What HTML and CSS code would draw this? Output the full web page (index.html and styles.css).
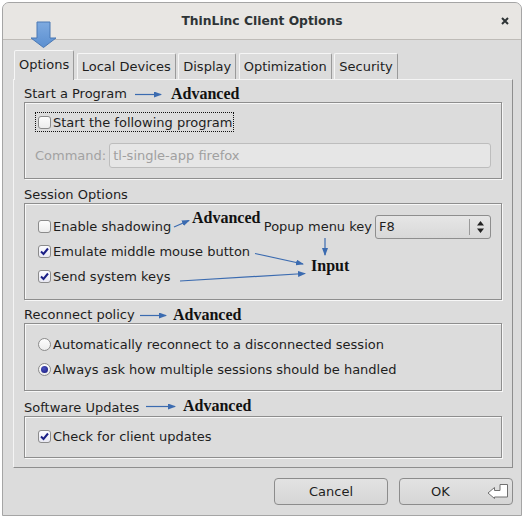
FILE: index.html
```html
<!DOCTYPE html>
<html lang="en">
<head>
    <meta charset="UTF-8">
    <title>ThinLinc Client Options</title>
    <link rel="stylesheet" href="styles.css">
</head>
<body>
    <div class="window">
        <div class="titlebar">
            <span class="title">ThinLinc Client Options</span>
            <button class="close" aria-label="Close">
                <svg viewBox="0 0 8 8" width="8" height="8"><path d="M1 1L7 7M7 1L1 7" stroke="#2e3436" stroke-width="2"/></svg>
            </button>
        </div>

        <div class="content">
            <div class="tabs">
                <div class="tab active">Options</div>
                <div class="tab">Local Devices</div>
                <div class="tab">Display</div>
                <div class="tab">Optimization</div>
                <div class="tab">Security</div>
            </div>

            <div class="panel">
                <div class="group">
                    <div class="group-title">Start a Program</div>
                    <div class="group-box box-program">
                        <label class="row focus"><span class="check"></span>Start the following program</label>
                        <div class="command">
                            <span class="command-label">Command:</span>
                            <div class="field">tl-single-app firefox</div>
                        </div>
                    </div>
                </div>

                <div class="group">
                    <div class="group-title">Session Options</div>
                    <div class="group-box box-session">
                        <div class="row">
                            <span class="check"></span>Enable shadowing
                            <div class="popup">
                                <span>Popup menu key</span>
                                <div class="select">
                                    <span class="select-value">F8</span>
                                    <span class="spin">
                                        <svg viewBox="0 0 7 12" width="7" height="12"><path d="M3.5 0L7 4.5H0Z M3.5 12L7 7.5H0Z" fill="#222"/></svg>
                                    </span>
                                </div>
                            </div>
                        </div>
                        <div class="row"><span class="check on"><svg viewBox="0 0 11 11" width="11" height="11"><path d="M2 5.5L4.5 8L9 2.5" fill="none" stroke="#1b1f86" stroke-width="2"/></svg></span>Emulate middle mouse button</div>
                        <div class="row"><span class="check on"><svg viewBox="0 0 11 11" width="11" height="11"><path d="M2 5.5L4.5 8L9 2.5" fill="none" stroke="#1b1f86" stroke-width="2"/></svg></span>Send system keys</div>
                    </div>
                </div>

                <div class="group group-reconnect">
                    <div class="group-title">Reconnect policy</div>
                    <div class="group-box box-reconnect">
                        <div class="row"><span class="radio"></span>Automatically reconnect to a disconnected session</div>
                        <div class="row"><span class="radio on"></span>Always ask how multiple sessions should be handled</div>
                    </div>
                </div>

                <div class="group group-updates">
                    <div class="group-title">Software Updates</div>
                    <div class="group-box box-updates">
                        <div class="row"><span class="check on"><svg viewBox="0 0 11 11" width="11" height="11"><path d="M2 5.5L4.5 8L9 2.5" fill="none" stroke="#1b1f86" stroke-width="2"/></svg></span>Check for client updates</div>
                    </div>
                </div>
            </div>

            <div class="buttons">
                <button class="button">Cancel</button>
                <button class="button button-ok">
                    <span class="ok-text">OK</span>
                    <svg class="enter-icon" viewBox="0 0 22 18" width="22" height="18"><path d="M1 10L7.5 4.5V7.5H13V1.5H20.5V14H7.5V15.5Z" fill="#fff" stroke="#707070" stroke-width="1"/></svg>
                </button>
            </div>
        </div>
    </div>

    <!-- annotations drawn over the screenshot -->
    <svg class="overlay" width="524" height="518" viewBox="0 0 524 518">
        <defs>
            <marker id="head" markerWidth="8" markerHeight="6" refX="7" refY="3" orient="auto" markerUnits="userSpaceOnUse">
                <path d="M0 0L8 3L0 6Z" fill="#3b6bb0"/>
            </marker>
            <linearGradient id="bigArrow" x1="0" y1="0" x2="0" y2="1">
                <stop offset="0" stop-color="#7eaae0"/>
                <stop offset="1" stop-color="#5b8fd0"/>
            </linearGradient>
        </defs>
        <path d="M37 22H50V38H56L43.5 47.5L31 38H37Z" fill="url(#bigArrow)" stroke="#4a78b4" stroke-width="1"/>
        <g stroke="#3b6bb0" stroke-width="1.2" fill="none" marker-end="url(#head)">
            <path d="M135 94.5H161"/>
            <path d="M174 227L189 220.5"/>
            <path d="M255 253.5L303 264"/>
            <path d="M180 281L305 273.5"/>
            <path d="M325 238V255"/>
            <path d="M140 315.5H166"/>
            <path d="M146 406.5H175"/>
        </g>
    </svg>
    <b class="note note-program">Advanced</b>
    <b class="note note-shadow">Advanced</b>
    <b class="note note-input">Input</b>
    <b class="note note-reconnect">Advanced</b>
    <b class="note note-updates">Advanced</b>
</body>
</html>
```

FILE: styles.css
```css
* {
    margin: 0;
    padding: 0;
    box-sizing: border-box;
}

body {
    width: 524px;
    height: 518px;
    position: relative;
    overflow: hidden;
    background: #fff;
    font-family: "DejaVu Sans", sans-serif;
    font-size: 13px;
    color: #1e1e1e;
}

button {
    font: inherit;
    color: inherit;
}

.window {
    margin: 2px 0 0 2px;
    width: 520px;
    height: 514px;
    border: 1px solid #a5a5a5;
    border-radius: 7px 7px 0 0;
    background: #dcdcdc;
    display: flex;
    flex-direction: column;
    overflow: hidden;
}

.titlebar {
    flex: none;
    height: 37px;
    display: grid;
    grid-template-columns: 1fr auto 1fr;
    align-items: center;
    background: #e8e6e3;
    border-bottom: 1px solid #bebbb7;
}

.title {
    grid-column: 2;
    font-weight: bold;
    font-size: 12.3px;
    color: #2e3436;
}

.close {
    grid-column: 3;
    justify-self: end;
    margin-right: 12px;
    width: 8px;
    height: 8px;
    border: none;
    background: none;
    display: flex;
}

.content {
    flex: 1;
    padding: 10px 8px 0 10px;
    display: flex;
    flex-direction: column;
}

/* tabs */
.tabs {
    display: flex;
    align-items: flex-end;
    gap: 2.5px;
    height: 29px;
    padding-left: 1px;
}

.tab {
    height: 26px;
    padding: 0 4px;
    line-height: 25px;
    border: 1px solid;
    border-bottom: none;
    border-color: #f6f6f6 #9a9a9a transparent #f6f6f6;
    border-radius: 2px 2px 0 0;
}

.tab.active {
    height: 30px;
    line-height: 28px;
    margin-bottom: -1px;
    position: relative;
    z-index: 1;
    background: #dcdcdc;
}

.panel {
    border: 1px solid;
    border-color: #f4f4f4 #8e8e8e #8e8e8e #f4f4f4;
    padding: 5px 10px 9px;
}

/* groups */
.group + .group {
    margin-top: 7px;
}

.group-reconnect {
    margin-top: 6px !important;
}

.group-updates {
    margin-top: 8px !important;
}

.group-title {
    line-height: 17px;
}

.group-box {
    border: 1px solid #8e8e8e;
    box-shadow: inset 1px 1px 0 #f7f7f7, 1px 1px 0 #f7f7f7;
    padding: 9px 10px 10px 13px;
}

.box-program {
    display: flex;
    flex-direction: column;
    gap: 11px;
}

.box-session {
    padding-top: 10px;
}

.box-reconnect {
    padding-top: 8px;
    padding-bottom: 8px;
}

.box-updates {
    padding-top: 7px;
    padding-bottom: 8px;
}

.row {
    display: flex;
    align-items: center;
    gap: 2px;
    height: 25px;
}

.focus {
    height: 20px;
    align-self: flex-start;
    margin-left: -3px;
    padding: 0 1px 0 2px;
    border: 1px dotted #111;
}

.check,
.radio {
    flex: none;
    width: 13px;
    height: 13px;
    border: 1px solid #8b8b8b;
    background: linear-gradient(#fdfdfd, #ececec);
    display: flex;
    align-items: center;
    justify-content: center;
}

.check {
    border-radius: 3px;
}

.check.on {
    background: linear-gradient(#fbfbff, #e8e8f2);
}

.radio {
    border-radius: 50%;
}

.radio.on::after {
    content: "";
    width: 7px;
    height: 7px;
    border-radius: 50%;
    background: radial-gradient(circle at 40% 35%, #4b52c0, #15177a);
}

.command {
    display: flex;
    align-items: center;
    gap: 3px;
    height: 25px;
    margin-left: -3px;
}

.command-label {
    color: #a2a2a2;
}

.field {
    flex: 1;
    height: 25px;
    padding-left: 3px;
    line-height: 23px;
    border: 1px solid #bdbdbd;
    border-radius: 3px;
    background: #e6e6e6;
    color: #a0a0a0;
}

.popup {
    margin-left: auto;
    display: flex;
    align-items: center;
    gap: 3px;
}

.select {
    width: 116px;
    height: 24px;
    display: flex;
    align-items: center;
    border: 1px solid #8e8e8e;
    border-radius: 3px;
    background: linear-gradient(#e6e6e6, #d8d8d8);
}

.select-value {
    padding-left: 3px;
}

.spin {
    margin-left: auto;
    width: 21px;
    height: 16px;
    border-left: 1px solid #9a9a9a;
    display: flex;
    align-items: center;
    justify-content: center;
}

/* dialog buttons */
.buttons {
    display: flex;
    justify-content: flex-end;
    gap: 11px;
    margin-top: 10px;
}

.button {
    width: 114px;
    height: 27px;
    border: 1px solid #8c8c8c;
    border-radius: 4px;
    background: linear-gradient(#e2e2e2, #d6d6d6);
    display: flex;
    align-items: center;
    justify-content: center;
}

.button-ok {
    justify-content: space-between;
    padding-left: 6px;
}

.ok-text {
    flex: 1;
    padding-right: 12px;
    text-align: center;
}

.enter-icon {
    margin-right: 3px;
}

/* annotations */
.overlay {
    position: absolute;
    left: 0;
    top: 0;
    pointer-events: none;
}

.note {
    position: absolute;
    font: bold 16px/16px "Liberation Serif", serif;
    color: #111;
}

.note-program { left: 171px; top: 86px; }
.note-shadow { left: 192px; top: 210px; }
.note-input { left: 311px; top: 258px; }
.note-reconnect { left: 173px; top: 307px; }
.note-updates { left: 183px; top: 398px; }
```
